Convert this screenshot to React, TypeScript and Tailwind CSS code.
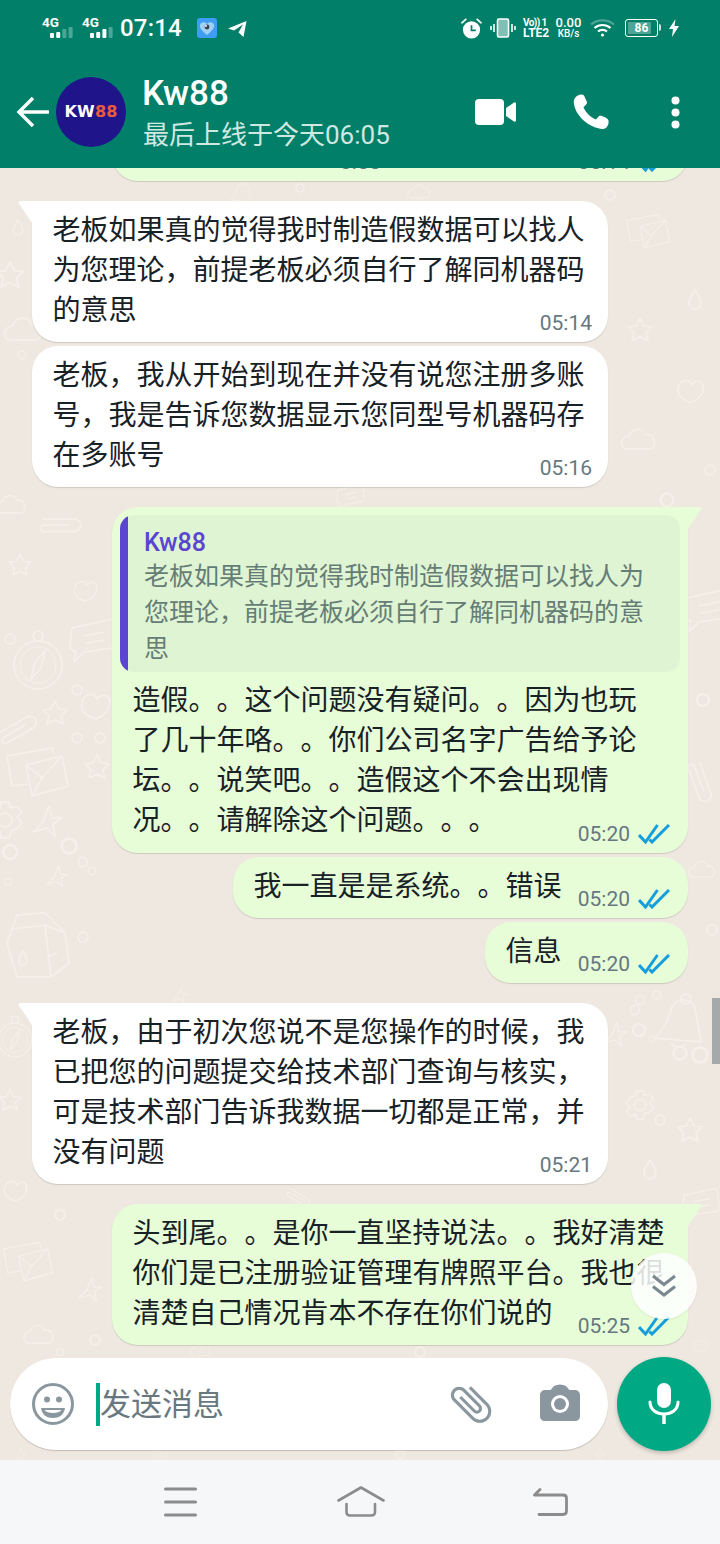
import type { ReactNode } from 'react';

type DoodleKind = 'circle' | 'star' | 'spark' | 'heart' | 'drop' | 'cloud' | 'compass' | 'envelope' | 'milk' | 'bell' | 'clip' | 'gear' | 'note';

// x, y, kind, scale, rotation — placed where the wallpaper shows between the bubbles
const doodles: [number, number, DoodleKind, number?, number?][] = [
  [38, 665, 'compass'], [10, 639, 'circle'], [77, 690, 'circle'], [77, 738, 'circle'], [100, 738, 'circle'],
  [55, 713, 'star'], [97, 767, 'star'], [95, 705, 'heart'], [15, 725, 'clip', 1, 0], [40, 770, 'envelope'],
  [5, 820, 'gear'], [47, 822, 'spark'], [57, 877, 'spark', 0.7], [69, 846, 'circle', 1.5], [10, 852, 'circle', 1.4],
  [83, 862, 'circle', 0.9], [92, 871, 'circle', 0.7], [8, 882, 'circle', 0.7], [37, 945, 'milk'], [83, 937, 'circle'],
  [92, 640, 'note'], [10, 275, 'star', 1.1], [18, 228, 'drop', 0.8], [25, 330, 'cloud'], [22, 355, 'circle', 0.8],
  [12, 505, 'cloud', 0.8], [20, 565, 'star', 0.9], [60, 520, 'clip', 1, 30], [85, 590, 'heart', 0.8],
  [677, 1020, 'bell'], [640, 1000, 'circle', 0.9], [635, 1010, 'circle', 0.9], [657, 995, 'circle', 0.8], [639, 1030, 'circle', 1.2],
  [680, 1053, 'circle', 1.3], [700, 1055, 'circle', 1.5], [652, 1039, 'circle', 0.6], [615, 1035, 'spark', 0.8],
  [667, 500, 'circle', 1.3], [650, 230, 'envelope', 0.7], [695, 300, 'drop'], [640, 330, 'star'], [690, 390, 'heart', 0.9],
  [640, 440, 'cloud', 0.9], [710, 470, 'circle'], [707, 610, 'note'], [703, 700, 'circle', 1.2], [705, 780, 'clip', 1, 100],
  [703, 870, 'cloud', 0.7], [712, 930, 'circle'], [640, 1105, 'gear', 0.8], [690, 1130, 'star'], [650, 1170, 'drop'],
  [700, 1205, 'note', 0.8], [15, 1040, 'compass', 0.7], [10, 1100, 'star', 0.9], [15, 1190, 'heart', 0.8], [60, 1215, 'circle'],
  [30, 1260, 'envelope', 0.8], [90, 1290, 'spark', 0.8], [40, 1335, 'cloud', 0.8], [95, 1340, 'circle'], [300, 188, 'circle', 0.8],
  [420, 192, 'cloud', 0.6], [240, 192, 'bell', 0.45], [610, 195, 'circle'], [350, 497, 'note', 0.6], [180, 996, 'spark', 0.5],
  [660, 1120, 'circle'], [300, 1195, 'clip', 0.6, 60], [200, 1352, 'note', 0.4], [420, 1352, 'circle'], [700, 1345, 'heart', 0.5],
  [60, 1352, 'circle', 0.7], [160, 1455, 'note', 0.3], [400, 1455, 'circle', 0.8], [600, 1455, 'star', 0.4], [20, 1455, 'spark', 0.4],
];

function Doodle({ kind }: { kind: DoodleKind }) {
  switch (kind) {
    case 'circle':
      return <circle r="5" />;
    case 'star':
      return <path d="M0 -12 4 -4 12 -3 6 3 8 11 0 7 -8 11 -6 3 -12 -3 -4 -4Z" strokeLinejoin="round" />;
    case 'spark':
      return <path d="M2 -16 5 -4 15 -4 6 2 8 14 0 6 -14 10 -4 0Z" strokeLinejoin="round" />;
    case 'heart':
      return <path d="M0 14C-12 10-16 2-12-6-8-12 0-12 2-6 8-14 18-8 14 2 12 8 6 12 0 14Z" />;
    case 'drop':
      return <path d="M0 -10C4 -4 6 0 6 3A6 6 0 0 1 -6 3C-6 0 -4 -4 0 -10Z" />;
    case 'cloud':
      return <path d="M-16 10C-24 6-20-4-12-4-10-14 4-14 6-6 16-8 20 6 12 10Z" />;
    case 'compass':
      return (
        <g>
          <circle r="24" />
          <circle r="18" opacity="0.6" />
          <circle cy="-29" r="5" />
          <path d="M7 -14 3 3 -7 14 -3 -3Z" />
        </g>
      );
    case 'envelope':
      return (
        <g strokeLinejoin="round">
          <path d="M-33 -14 12 -22 14 -16M-33 -14 -28 16 -12 14" />
          <path d="M-14 -5 22 -14 28 16 -8 26Z" />
          <path d="M-14 -5 2 8 22 -14M-8 26 3 6" />
        </g>
      );
    case 'milk':
      return (
        <g strokeLinejoin="round">
          <path d="M-25 -16 -20 -30 8 -32 28 -12 32 18 14 32 -20 32 -30 -2Z" />
          <path d="M-25 -16 8 -20 14 32M8 -20 28 -12" />
          <path d="M-14 6C-11 11-10 14-10 16A4 4 0 0 1 -18 16C-18 14-17 11-14 6Z" />
          <path d="M20 8 10 12" />
        </g>
      );
    case 'bell':
      return (
        <g strokeLinejoin="round">
          <path d="M-22 18C-12 8-8-2-6-10-4-22 14-24 18-12 20 0 22 10 24 22Z" />
          <circle cx="9" cy="-21" r="5" />
          <path d="M-6 22A8 8 0 0 0 8 24" />
        </g>
      );
    case 'clip':
      return <path d="M-16 8 12 -8A6 6 0 0 1 18 3L-8 18A3 3 0 0 1 -12 13L10 0" strokeLinecap="round" />;
    case 'gear':
      return (
        <g>
          <circle r="7" />
          <path d="M-4 -18H4L5 -12 12 -14 17 -8 12 -3 17 3 12 9 6 11 4 18H-4L-5 12-12 14-17 8-12 3-17-3-12-9-5-12Z" strokeLinejoin="round" />
        </g>
      );
    case 'note':
      return (
        <g strokeLinejoin="round">
          <path d="M-20 -12 16 -20A4 4 0 0 1 22 -16L24 4A4 4 0 0 1 20 8L-8 12-18 22-16 10A4 4 0 0 1 -22 6Z" />
          <path d="M-8 -4 12 -8M-6 3 12 0" />
        </g>
      );
  }
}

function Wallpaper() {
  return (
    <svg className="absolute inset-0 h-full w-full" viewBox="0 0 720 1460" fill="none" stroke="#f5f0ea" strokeWidth="1.6" aria-hidden="true">
      {doodles.map(([x, y, kind, scale = 1, rot = 0], i) => (
        <g key={i} transform={`translate(${x} ${y}) rotate(${rot}) scale(${scale})`}>
          <Doodle kind={kind} />
        </g>
      ))}
    </svg>
  );
}

function Signal({ strong }: { strong: number }) {
  return (
    <div className="relative h-[22px] w-[32px]">
      <span className="absolute left-0 top-[-1px] text-[13.5px] font-bold leading-[13px] text-white">4G</span>
      <svg className="absolute left-0 top-0" width="32" height="22" viewBox="0 0 32 22" fill="#fff">
        {[5, 6, 9, 11].map((h, i) => (
          <rect key={i} x={8 + i * 6.2} y={21 - h} width="4" height={h} rx="1" opacity={i < strong ? 1 : 0.3} />
        ))}
      </svg>
    </div>
  );
}

function StatusBar() {
  return (
    <div className="flex h-[56px] items-center pl-[42px] text-white">
      <Signal strong={2} />
      <div className="ml-[8px]">
        <Signal strong={3} />
      </div>
      <span className="ml-[6px] text-[24px] font-medium leading-none tracking-[0.2px]">07:14</span>
      <svg className="ml-[15px]" width="20" height="20" viewBox="0 0 20 20">
        <rect width="20" height="20" rx="3" fill="#3f9ef4" />
        <path d="M10 17C5 13 2.5 10 3 7 3.6 3.8 8 3.2 10 6 12 3.2 16.4 3.8 17 7 17.5 10 15 13 10 17Z" fill="#9fd0f5" />
        <circle cx="10" cy="9" r="2.4" fill="#3a3f4a" />
        <circle cx="9" cy="8" r="1" fill="#fff" />
      </svg>
      <svg className="ml-[11px]" width="19" height="17" viewBox="0 0 19 17" fill="#fff">
        <path d="M0 8.5 18.5 1 15.5 17 10.5 12.5 15 4.5 6 10.5Z" />
      </svg>

      <svg className="ml-auto" width="21" height="21" viewBox="0 0 22 22">
        <circle cx="11" cy="12.5" r="9" fill="#fff" />
        <path d="M11 7.5V13H15.5" fill="none" stroke="#017f69" strokeWidth="1.8" />
        <path d="M1 5 5 1.5M21 5 17 1.5" stroke="#fff" strokeWidth="1.8" strokeLinecap="round" />
      </svg>
      <svg className="ml-[8px]" width="26" height="20" viewBox="0 0 26 20" fill="none" stroke="#fff">
        <rect x="7.5" y="1" width="11" height="18" rx="1.5" fill="#ffffff80" strokeWidth="1.6" />
        <path d="M4 6V14M1 8V12M22 6V14M25 8V12" strokeWidth="1.6" />
      </svg>
      <div className="ml-[7px] flex w-[27px] flex-col font-bold leading-[10.5px]">
        <span className="whitespace-nowrap text-[10px] tracking-[-0.6px]">Vo)) 1</span>
        <span className="whitespace-nowrap text-[12px]">LTE2</span>
      </div>
      <div className="ml-[5px] flex w-[27px] flex-col items-center font-medium">
        <span className="text-[13px] leading-[12px]">0.00</span>
        <span className="text-[10px] leading-[10px]">KB/s</span>
      </div>
      <svg className="ml-[8px]" width="25" height="20" viewBox="0 0 25 20" fill="none" stroke="#fff" strokeWidth="2.2">
        <path d="M1 6.5C7.5 1 17.5 1 24 6.5" opacity="0.3" />
        <path d="M4.5 10C9 6 16 6 20.5 10" />
        <path d="M8 13.5C10.5 11.4 14.5 11.4 17 13.5" />
        <circle cx="12.5" cy="17" r="1.6" fill="#fff" stroke="none" />
      </svg>
      <div className="relative ml-[10px] flex h-[18px] w-[33px] items-center justify-center rounded-[3px] border-[1.5px] border-white">
        <span className="absolute inset-y-[2px] left-[2px] w-[23px] rounded-[1px] bg-white/30" />
        <span className="relative text-[12px] font-bold leading-none">86</span>
        <span className="absolute -right-[4px] top-[4px] h-[7px] w-[2px] rounded-r bg-white/80" />
      </div>
      <svg className="ml-[11px] mr-[41px]" width="10" height="18" viewBox="0 0 10 18" fill="#fff">
        <path d="M6.5 0 0 10H4L3 18 10 7H5.5Z" />
      </svg>
    </div>
  );
}

function Header() {
  return (
    <header className="flex h-[168px] shrink-0 flex-col bg-[#017f69]">
      <StatusBar />
      <div className="flex flex-1 items-center text-white">
        <svg className="ml-[16px]" width="33" height="32" viewBox="0 0 33 32" fill="none" stroke="#fff" strokeWidth="3.4">
          <path d="M17 2 3 16 17 30M3 16H33" />
        </svg>
        <div className="ml-[7px] flex h-[70px] w-[70px] items-center justify-center rounded-full bg-[#20148a] font-['DejaVu_Sans',sans-serif] text-[16px] font-bold leading-none tracking-[0.2px]">
          <span className="text-white">KW</span>
          <span className="text-[#ea5c3c]">88</span>
        </div>
        <div className="ml-[16px] flex flex-col pt-[3px]">
          <span className="text-[35px] font-medium leading-[40px]">Kw88</span>
          <span className="mt-[3px] pl-[1px] text-[26px] leading-[36px] text-[#cfe8e1]">最后上线于今天06:05</span>
        </div>
        <svg className="ml-auto" width="41" height="26" viewBox="0 0 41 26" fill="#fff">
          <rect width="29" height="26" rx="4" />
          <path d="M31 9 39 3.5Q41 2.5 41 5V21Q41 23.5 39 22.5L31 17Z" />
        </svg>
        <svg className="ml-[57px]" width="36" height="36" viewBox="0 0 36 36" fill="#fff">
          <path d="M2 4C4 1 9-.5 11 1.5L14 8C14.5 10 11 12 10.5 13.5C13 18.5 17 23 23 25.5L26 22C28 21 35 24 35.5 26.5 36 31 34 34.5 30 35 15 34 1 20 .8 8 .8 6.5 1.2 5 2 4Z" />
        </svg>
        <svg className="ml-[62px] mr-[40px]" width="9" height="33" viewBox="0 0 9 33" fill="#fff">
          <circle cx="4.5" cy="4.5" r="4" />
          <circle cx="4.5" cy="16.5" r="4" />
          <circle cx="4.5" cy="28.5" r="4" />
        </svg>
      </div>
    </header>
  );
}

function Ticks() {
  return (
    <svg width="32" height="20" viewBox="0 0 32 20" fill="none" stroke="#149fdc" strokeWidth="3">
      <path d="M1 11 7.5 18 19.5 1" />
      <path d="M11.5 15.5 14 18 31 1" />
    </svg>
  );
}

function Bubble({
  side,
  width = 'w-[576px]',
  lines,
  time,
  tail,
  top,
}: {
  side: 'in' | 'out';
  width?: string;
  lines: string[];
  time: string;
  tail?: boolean;
  top?: ReactNode;
}) {
  const out = side === 'out';
  return (
    <div
      className={`relative shrink-0 rounded-[26px] shadow-[0_1px_1px_rgba(0,0,0,0.14)] ${width} ${
        out ? 'mr-[32px] self-end bg-[#e6fdd8]' : 'ml-[32px] self-start bg-white'
      } ${tail && out ? 'rounded-tr-none' : ''} ${tail && !out ? 'rounded-tl-none' : ''} ${top ? 'pb-[12px] pt-[8px]' : 'pb-[11px] pt-[10px]'}`}
    >
      {tail && out && (
        <svg className="absolute -right-[14px] top-0" width="14" height="22" viewBox="0 0 14 22" fill="#e6fdd8">
          <path d="M0 0H11Q14.5 0 13 2.5L0 22Z" />
        </svg>
      )}
      {tail && !out && (
        <svg className="absolute -left-[14px] top-0" width="14" height="22" viewBox="0 0 14 22" fill="#fff">
          <path d="M14 0H3Q-.5 0 1 2.5L14 22Z" />
        </svg>
      )}
      {top}
      <div className="whitespace-nowrap pl-[20.5px] text-[28px] leading-[40px] text-[#182126]">
        {lines.map((line) => (
          <div key={line}>{line}</div>
        ))}
      </div>
      <div className={`absolute bottom-[7px] flex items-center text-[21px] leading-[24px] text-[#66777f] ${out ? 'right-[18px]' : 'right-[16px]'}`}>
        <span>{time}</span>
        {out && (
          <span className="ml-[8px] flex">
            <Ticks />
          </span>
        )}
      </div>
    </div>
  );
}

function QuoteBlock() {
  return (
    <div className="mx-[8px] mb-[9px] flex h-[157px] overflow-hidden rounded-[14px] bg-[#dff4d3]">
      <div className="w-[8px] shrink-0 bg-[#5a45d0]" />
      <div className="whitespace-nowrap pl-[16px] pt-[12px]">
        <div className="text-[25px] font-medium leading-[31px] text-[#5a45d0]">Kw88</div>
        <div className="mt-[1px] text-[25px] leading-[36px] text-[#667d76]">
          <div>老板如果真的觉得我时制造假数据可以找人为</div>
          <div>您理论，前提老板必须自行了解同机器码的意</div>
          <div>思</div>
        </div>
      </div>
    </div>
  );
}

function Messages() {
  return (
    <div className="relative flex min-h-0 flex-1 flex-col justify-end pb-[12px]">
      {/* bubble cut off by the header */}
      <div className="relative mr-[32px] h-[60px] w-[576px] shrink-0 self-end rounded-[26px] bg-[#e6fdd8] shadow-[0_1px_1px_rgba(0,0,0,0.14)]">
        <span className="absolute bottom-[7px] left-[228px] text-[21px] leading-[24px] text-[#66777f]">0:55</span>
        <div className="absolute bottom-[7px] right-[18px] flex items-center text-[21px] leading-[24px] text-[#66777f]">
          <span>05:14</span>
          <span className="ml-[8px] flex">
            <Ticks />
          </span>
        </div>
      </div>

      <div className="mt-[20px] flex flex-col gap-[4px]">
        <Bubble
          side="in"
          tail
          time="05:14"
          lines={['老板如果真的觉得我时制造假数据可以找人', '为您理论，前提老板必须自行了解同机器码', '的意思']}
        />
        <Bubble
          side="in"
          time="05:16"
          lines={['老板，我从开始到现在并没有说您注册多账', '号，我是告诉您数据显示您同型号机器码存', '在多账号']}
        />
      </div>

      <div className="mt-[20px] flex flex-col gap-[4px]">
        <Bubble
          side="out"
          tail
          time="05:20"
          top={<QuoteBlock />}
          lines={['造假。。这个问题没有疑问。。因为也玩', '了几十年咯。。你们公司名字广告给予论', '坛。。说笑吧。。造假这个不会出现情', '况。。请解除这个问题。。。']}
        />
        <Bubble side="out" width="w-[455px]" time="05:20" lines={['我一直是是系统。。错误']} />
        <Bubble side="out" width="w-[203px]" time="05:20" lines={['信息']} />
      </div>

      <div className="mt-[20px]">
        <Bubble
          side="in"
          tail
          time="05:21"
          lines={['老板，由于初次您说不是您操作的时候，我', '已把您的问题提交给技术部门查询与核实，', '可是技术部门告诉我数据一切都是正常，并', '没有问题']}
        />
      </div>

      <div className="mt-[20px] flex flex-col">
        <Bubble
          side="out"
          tail
          time="05:25"
          lines={['头到尾。。是你一直坚持说法。。我好清楚', '你们是已注册验证管理有牌照平台。我也很', '清楚自己情况肯本不存在你们说的']}
        />
      </div>

      {/* scroll to bottom button */}
      <button className="absolute bottom-[38px] right-[23px] flex h-[66px] w-[66px] items-center justify-center rounded-full bg-white/85 shadow-[0_1px_2px_rgba(0,0,0,0.08)]">
        <svg width="26" height="24" viewBox="0 0 26 24" fill="none" stroke="#7b8890" strokeWidth="3">
          <path d="M2 2 13 10.5 24 2M2 12.5 13 21 24 12.5" />
        </svg>
      </button>

      {/* scrollbar thumb */}
      <div className="absolute right-0 top-[830px] h-[66px] w-[8px] bg-[#a6a9a9]" />
    </div>
  );
}

function Composer() {
  return (
    <div className="relative flex h-[103px] shrink-0 items-start pl-[10px]">
      <div className="mt-[1px] flex h-[92px] w-[598px] items-center rounded-full bg-white shadow-[0_1px_1px_rgba(0,0,0,0.18)]">
        <svg className="ml-[21px]" width="44" height="44" viewBox="0 0 44 44">
          <circle cx="22" cy="22" r="19.5" fill="none" stroke="#8a979f" strokeWidth="3" />
          <circle cx="16" cy="17.5" r="3" fill="#8a979f" />
          <circle cx="28" cy="17.5" r="3" fill="#8a979f" />
          <path d="M10 26H34C33 33 28 36 22 36S11 33 10 26Z" fill="#8a979f" />
          <path d="M13.5 28H30.5C29 30 26 31 22 31S15 30 13.5 28Z" fill="#fff" />
        </svg>
        <div className="ml-[21px] h-[43px] w-[4px] bg-[#00a884]" />
        <span className="text-[31px] leading-none text-[#69787f]">发送消息</span>
        <svg className="ml-auto" width="50" height="50" viewBox="0 0 24 24" fill="#8a979f">
          <path
            transform="rotate(-45 12 12)"
            d="M16.5 6v11.5c0 2.21-1.79 4-4 4s-4-1.79-4-4V5c0-1.38 1.12-2.5 2.5-2.5s2.5 1.12 2.5 2.5v10.5c0 .55-.45 1-1 1s-1-.45-1-1V6H10v9.5c0 1.38 1.12 2.5 2.5 2.5s2.5-1.12 2.5-2.5V5c0-2.21-1.79-4-4-4S7 2.79 7 5v12.5c0 3.04 2.46 5.5 5.5 5.5s5.5-2.46 5.5-5.5V6h-1.5z"
          />
        </svg>
        <svg className="ml-[40px] mr-[24px]" width="48" height="48" viewBox="0 0 24 24">
          <path d="M9 3 7.3 5H4.5C3.1 5 2 6.1 2 7.5V18C2 19.6 3.1 20.5 4.5 20.5H19.5C20.9 20.5 22 19.6 22 18V7.5C22 6.1 20.9 5 19.5 5H16.7L15 3C13 2 11 2 9 3Z" fill="#8a979f" />
          <circle cx="12" cy="12" r="4.5" fill="#fff" />
          <circle cx="12" cy="12" r="3" fill="#8a979f" />
        </svg>
      </div>
      <div className="ml-[9px] flex h-[94px] w-[94px] items-center justify-center rounded-full bg-[#00a884] shadow-[0_2px_4px_rgba(0,0,0,0.22)]">
        <svg width="32" height="42" viewBox="0 0 32 42" fill="none">
          <rect x="9" y="0" width="14" height="25" rx="7" fill="#fff" />
          <path d="M2 19C2 35 30 35 30 19" stroke="#fff" strokeWidth="3" strokeLinecap="round" />
          <path d="M16 30V41" stroke="#fff" strokeWidth="3.5" />
        </svg>
      </div>
    </div>
  );
}

function NavBar() {
  return (
    <nav className="flex h-[84px] shrink-0 items-center bg-[#f6f7f9] pl-[164px]">
      <svg width="33" height="30" viewBox="0 0 33 30" fill="none" stroke="#8c8c8c" strokeWidth="3" strokeLinecap="round">
        <path d="M1.5 2H31.5M1.5 15H31.5M1.5 28H31.5" />
      </svg>
      <svg className="ml-[140px]" width="48" height="32" viewBox="0 0 48 32" fill="none" stroke="#8c8c8c" strokeWidth="2.6" strokeLinecap="round" strokeLinejoin="round">
        <path d="M1.5 14.5 24 1.5 46.5 14.5" />
        <path d="M9.5 18V26Q9.5 29.5 13 29.5H34Q38 29.5 38 26V18" />
      </svg>
      <svg className="ml-[148px]" width="35" height="28" viewBox="0 0 35 28" fill="none" stroke="#8c8c8c" strokeWidth="2.8" strokeLinecap="round" strokeLinejoin="round">
        <path d="M7 1.5 1.5 7H30Q33.5 7 33.5 10V23Q33.5 26.5 30 26.5H6" />
      </svg>
    </nav>
  );
}

export default function App() {
  return (
    <div lang="zh-CN" className="flex h-[1544px] w-[720px] flex-col overflow-hidden bg-[#efe8e0] font-[Roboto,'Noto_Sans_CJK_SC',sans-serif] [text-spacing-trim:space-all]">
      <div className="relative flex min-h-0 flex-1 flex-col">
        <main className="relative flex min-h-0 flex-1 flex-col overflow-hidden pt-[168px]">
          <Wallpaper />
          <Messages />
          <Composer />
        </main>
        <div className="absolute inset-x-0 top-0">
          <Header />
        </div>
      </div>
      <NavBar />
    </div>
  );
}
